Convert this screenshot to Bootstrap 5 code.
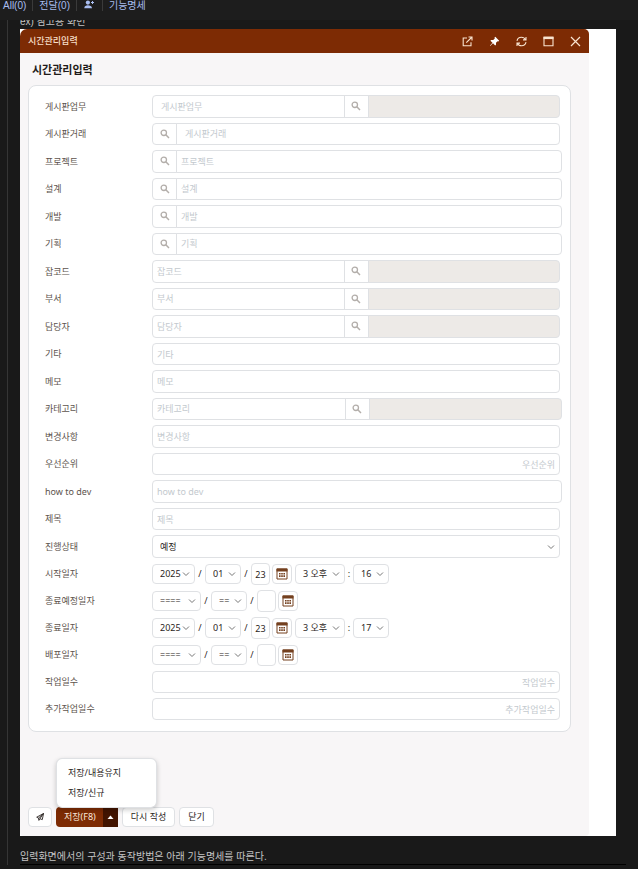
<!DOCTYPE html>
<html lang="ko">
<head>
<meta charset="utf-8">
<meta name="viewport" content="width=device-width, initial-scale=1">
<title>시간관리입력</title>
<link href="https://cdn.jsdelivr.net/npm/bootstrap@5.3.0/dist/css/bootstrap.min.css" rel="stylesheet">
<style>
:root{--brand:#7d2b04;--line:#dfe1e4;--hint:#c3c9ce;--ink:#2b2523}
body{background:#191919;color:#c4c4c4;font:10px/16px "Liberation Sans","Noto Sans CJK KR",sans-serif}
.topbar{height:20px;background:#1d1d1d;line-height:12px}
.topbar a{color:#a9bdf0;text-decoration:none;padding:0 6px;height:11px;border-right:1px solid #3a3a3a}
.topbar a:first-child{padding-left:3px}
.topbar a:nth-child(3){padding:0 8px 0 7px}
.topbar a:last-child{border:0}
.doc{margin-left:7px;border-left:1px solid #353535;padding:0 22px 0 12px}
.cut-line{height:9px;line-height:14px}
.shot{background:#fff;padding-right:27px;font-family:"Noto Sans","Noto Sans CJK KR",sans-serif;font-size:9px;line-height:14px;color:var(--ink)}
.window{background:#f8f6f7;border-radius:8px 6px 4px 4px}
.titlebar{background:var(--brand);color:#f6dfc9;height:24px;padding-left:8px;border-radius:7px 5px 0 0;font-weight:500}
.titlebar button{width:27px;height:24px;border:0;background:none;color:#f9e4d0;padding:0}
.window h1{font-size:11px;line-height:34px;height:32px;font-weight:700;margin:0;padding-left:12px;color:#1f1b1a}
.sheet{margin:0 18px 0 8px;border:1px solid var(--line);border-radius:8px;background:#fff;padding:9px 10px 11px 16px}
.rows{display:grid;gap:5px}
.rows-days{margin-top:5px}
.line{display:grid;grid-template-columns:107px minmax(0,1fr);align-items:center;height:22px}
.rows-main .line:nth-child(odd){height:23px}
.line>label{color:#5d534d}
.line>.form-control,.line>.form-select,.line>.input-group{height:100%}
.form-control,.form-select{font-size:9px;line-height:14px;min-height:0;padding:0 4px;border-color:var(--line);border-radius:4px;color:var(--ink);background-color:#fff}
.form-control::placeholder{color:var(--hint);opacity:1}
.form-control[readonly]{background:#edeae7}
.inset{text-indent:4px}
.overhang{margin-right:-2px;width:auto}
.form-select{padding:0 0 0 7px;background-image:url("data:image/svg+xml,%3Csvg xmlns='http://www.w3.org/2000/svg' viewBox='0 0 8 8'%3E%3Cpath fill='none' stroke='%23777' d='M1 2.5 4 5.5 7 2.5'/%3E%3C/svg%3E");background-size:8px 8px;background-position:right 4px center}
.btn-find{width:25px;padding:0 0 1px;border:1px solid var(--line);background:#fff;color:#b3aeaa;border-radius:4px;line-height:1}
.dates .form-select{height:20px;flex:none}
.dates .form-control{width:19px;height:22px;padding:0;text-align:center;flex:none}
.dates .y{width:43px}.dates .y-blank{width:49px}.dates .m{width:36px}.dates .h{width:50px}
.sep{width:10px;text-align:center}
.sep-colon{width:8px;text-align:center}
.btn-cal{width:20px;height:20px;margin:0 3px 0 2px;padding:0;border:1px solid var(--line);border-radius:4px;background:#fff;line-height:1;color:#74401f}
.actions{padding:75px 8px 9px;gap:4px}
.actions .btn{font-size:9px;line-height:14px;height:20px;padding:0 8px;border-radius:4px}
.actions .btn-plain,.actions .btn-plain:hover{border:1px solid var(--line);background:#fff;color:var(--ink)}
.actions .btn-send{width:24px;padding:0}
.actions .btn-save,.actions .btn-save:hover{background:var(--brand);color:#fbe9dc;border:0;border-radius:4px 0 0 4px}
.actions .btn-more{background:#421400;color:#fff;border:0;padding:0;width:15px;line-height:1;border-radius:0 4px 4px 0}
.save-menu{display:block;bottom:19px;left:0;min-width:101px;padding:4px 0;font-size:9px;border:1px solid var(--line);border-radius:6px;box-shadow:0 2px 5px #0003}
.save-menu .dropdown-item{padding:3px 11px;line-height:14px;color:var(--ink)}
.caption{margin:0 -10px 0 0;padding:13px 0 0;height:29px;border-bottom:1px solid #000}
svg{display:block;margin:auto}
</style>
<script src="https://cdn.jsdelivr.net/npm/bootstrap@5.3.0/dist/js/bootstrap.bundle.min.js"></script>
</head>
<body>
<svg width="0" height="0" class="d-none" aria-hidden="true">
<symbol id="find" viewBox="0 0 10 10"><circle cx="3.8" cy="3.8" r="2.7" fill="none" stroke="currentColor" stroke-width="1.3"/><path d="M5.8 5.8 9 9" stroke="currentColor" stroke-width="1.5"/></symbol>
<symbol id="cal" viewBox="0 0 12 12"><path d="M1 1h10v10H1z" fill="none" stroke="currentColor"/><path d="M.5.5h11v3H.5z" fill="currentColor"/><path d="M3 5h1.6v1.6H3zM5.2 5h1.6v1.6H5.2zM7.4 5H9v1.6H7.4zM3 7.3h1.6v1.6H3zM5.2 7.3h1.6v1.6H5.2zM7.4 7.3H9v1.6H7.4z" fill="currentColor"/></symbol>
</svg>

<nav class="topbar d-flex align-items-start">
<a href="#">All(0)</a><a href="#">전달(0)</a><a href="#" aria-label="사용자 추가"><svg width="10" height="10" viewBox="0 0 10 10" fill="currentColor"><circle cx="3.9" cy="2.6" r="2.1"/><path d="M.3 8.2C.3 6 2 5.2 3.9 5.2S8 6 8 8.2zM7 2h1V1h1v1h1v1H9v1H8V3H7z"/></svg></a><a href="#">기능명세</a>
</nav>

<main class="doc">
<div class="cut-line d-flex align-items-end overflow-hidden">ex) 참고용 화면</div>
<div class="shot">
<section class="window">
<header class="titlebar d-flex align-items-center">
<span class="me-auto">시간관리입력</span>
<button type="button" aria-label="새 창"><svg width="11" height="11" viewBox="0 0 11 11" fill="none" stroke="currentColor" stroke-width="1.1"><path d="M5 2H1.2v7.8H9V6.2M6.5 1H10v3.5M10 1 4.3 6.7"/></svg></button>
<button type="button" aria-label="고정"><svg width="11" height="11" viewBox="0 0 11 11" fill="#fff"><path d="M6.3.8 10.2 4.7 9.3 5.4 8.6 5.2 7 6.8 7 8.8 6.2 9.5 4 7.3 1.2 10 .9 9.7 3.5 6.8 1.4 4.7 2.1 4 4.2 4 5.8 2.4 5.5 1.6z"/></svg></button>
<button type="button" aria-label="새로고침"><svg width="11" height="11" viewBox="0 0 11 11" fill="none" stroke="currentColor" stroke-width="1.1"><path d="M1 4.8C1.5 2.3 3.4 1.2 5.4 1.2 7.3 1.2 8.8 2.2 9.6 3.8M10 .9v3H7M10 6.2C9.5 8.7 7.6 9.8 5.6 9.8 3.7 9.8 2.2 8.8 1.4 7.2M1 10.1v-3h3"/></svg></button>
<button type="button" aria-label="최대화"><svg width="11" height="11" viewBox="0 0 11 11"><path d="M1 1.2h9v8.6H1z" fill="none" stroke="currentColor" stroke-width="1.1"/><path d="M.5.7h10v2.4H.5z" fill="currentColor"/></svg></button>
<button type="button" aria-label="창 닫기"><svg width="11" height="11" viewBox="0 0 11 11" stroke="currentColor" stroke-width="1.2"><path d="m1 1 9 9M10 1 1 10"/></svg></button>
</header>
<h1>시간관리입력</h1>

<form>
<div class="sheet">
<div class="rows rows-main">
<div class="line"><label for="f1">게시판업무</label><div class="input-group"><input id="f1" class="form-control inset" placeholder="게시판업무"><button type="button" class="btn-find" aria-label="게시판업무 검색"><svg width="10" height="10"><use href="#find"/></svg></button><input class="form-control" readonly aria-label="게시판업무 이름"></div></div>
<div class="line"><label for="f2">게시판거래</label><div class="input-group"><button type="button" class="btn-find" aria-label="게시판거래 검색"><svg width="10" height="10"><use href="#find"/></svg></button><input id="f2" class="form-control inset" placeholder="게시판거래"></div></div>
<div class="line"><label for="f3">프로젝트</label><div class="input-group overhang"><button type="button" class="btn-find" aria-label="프로젝트 검색"><svg width="10" height="10"><use href="#find"/></svg></button><input id="f3" class="form-control" placeholder="프로젝트"></div></div>
<div class="line"><label for="f4">설계</label><div class="input-group overhang"><button type="button" class="btn-find" aria-label="설계 검색"><svg width="10" height="10"><use href="#find"/></svg></button><input id="f4" class="form-control" placeholder="설계"></div></div>
<div class="line"><label for="f5">개발</label><div class="input-group overhang"><button type="button" class="btn-find" aria-label="개발 검색"><svg width="10" height="10"><use href="#find"/></svg></button><input id="f5" class="form-control" placeholder="개발"></div></div>
<div class="line"><label for="f6">기획</label><div class="input-group overhang"><button type="button" class="btn-find" aria-label="기획 검색"><svg width="10" height="10"><use href="#find"/></svg></button><input id="f6" class="form-control" placeholder="기획"></div></div>
<div class="line"><label for="f7">잡코드</label><div class="input-group"><input id="f7" class="form-control" placeholder="잡코드"><button type="button" class="btn-find" aria-label="잡코드 검색"><svg width="10" height="10"><use href="#find"/></svg></button><input class="form-control" readonly aria-label="잡코드 이름"></div></div>
<div class="line"><label for="f8">부서</label><div class="input-group"><input id="f8" class="form-control" placeholder="부서"><button type="button" class="btn-find" aria-label="부서 검색"><svg width="10" height="10"><use href="#find"/></svg></button><input class="form-control" readonly aria-label="부서 이름"></div></div>
<div class="line"><label for="f9">담당자</label><div class="input-group"><input id="f9" class="form-control" placeholder="담당자"><button type="button" class="btn-find" aria-label="담당자 검색"><svg width="10" height="10"><use href="#find"/></svg></button><input class="form-control" readonly aria-label="담당자 이름"></div></div>
<div class="line"><label for="f10">기타</label><input id="f10" class="form-control" placeholder="기타"></div>
<div class="line"><label for="f11">메모</label><input id="f11" class="form-control" placeholder="메모"></div>
<div class="line"><label for="f12">카테고리</label><div class="input-group overhang"><input id="f12" class="form-control" placeholder="카테고리"><button type="button" class="btn-find" aria-label="카테고리 검색"><svg width="10" height="10"><use href="#find"/></svg></button><input class="form-control" readonly aria-label="카테고리 이름"></div></div>
<div class="line"><label for="f13">변경사항</label><input id="f13" class="form-control" placeholder="변경사항"></div>
<div class="line"><label for="f14">우선순위</label><input id="f14" class="form-control text-end" placeholder="우선순위"></div>
<div class="line"><label for="f15">how to dev</label><input id="f15" class="form-control overhang" placeholder="how to dev"></div>
<div class="line"><label for="f16">제목</label><input id="f16" class="form-control" placeholder="제목"></div>
<div class="line"><label for="f17">진행상태</label><select id="f17" class="form-select"><option>예정</option></select></div>
</div>
<div class="rows rows-days">
<div class="line"><label for="f18">시작일자</label><div class="dates d-flex align-items-center"><select id="f18" class="form-select y"><option>2025</option></select><span class="sep">/</span><select class="form-select m" aria-label="시작 월"><option>01</option></select><span class="sep">/</span><input class="form-control" value="23" aria-label="시작 일"><button type="button" class="btn-cal" aria-label="시작일자 달력"><svg width="12" height="12"><use href="#cal"/></svg></button><select class="form-select h" aria-label="시작 시"><option>3 오후</option></select><span class="sep-colon">:</span><select class="form-select m" aria-label="시작 분"><option>16</option></select></div></div>
<div class="line"><label for="f19">종료예정일자</label><div class="dates d-flex align-items-center"><select id="f19" class="form-select y-blank"><option>====</option></select><span class="sep">/</span><select class="form-select m" aria-label="종료예정 월"><option>==</option></select><span class="sep">/</span><input class="form-control" aria-label="종료예정 일"><button type="button" class="btn-cal" aria-label="종료예정일자 달력"><svg width="12" height="12"><use href="#cal"/></svg></button></div></div>
<div class="line"><label for="f20">종료일자</label><div class="dates d-flex align-items-center"><select id="f20" class="form-select y"><option>2025</option></select><span class="sep">/</span><select class="form-select m" aria-label="종료 월"><option>01</option></select><span class="sep">/</span><input class="form-control" value="23" aria-label="종료 일"><button type="button" class="btn-cal" aria-label="종료일자 달력"><svg width="12" height="12"><use href="#cal"/></svg></button><select class="form-select h" aria-label="종료 시"><option>3 오후</option></select><span class="sep-colon">:</span><select class="form-select m" aria-label="종료 분"><option>17</option></select></div></div>
<div class="line"><label for="f21">배포일자</label><div class="dates d-flex align-items-center"><select id="f21" class="form-select y-blank"><option>====</option></select><span class="sep">/</span><select class="form-select m" aria-label="배포 월"><option>==</option></select><span class="sep">/</span><input class="form-control" aria-label="배포 일"><button type="button" class="btn-cal" aria-label="배포일자 달력"><svg width="12" height="12"><use href="#cal"/></svg></button></div></div>
<div class="line"><label for="f22">작업일수</label><input id="f22" class="form-control text-end" placeholder="작업일수"></div>
<div class="line"><label for="f23">추가작업일수</label><input id="f23" class="form-control text-end" placeholder="추가작업일수"></div>
</div>
</div>

<div class="actions d-flex">
<button type="button" class="btn btn-plain btn-send" aria-label="보내기"><svg width="8" height="8" viewBox="0 0 8 8" fill="none" stroke="currentColor" stroke-width=".9"><path d="M7.5.5.7 4.2l1.8.9L7.5.5 6.3 6.6 3.9 5.7 2.9 7.4 2.5 5.1M7.5.5 3.9 5.7"/></svg></button>
<div class="btn-group dropup">
<button type="submit" class="btn btn-save">저장(F8)</button>
<button type="button" class="btn btn-more" aria-label="저장 메뉴" aria-expanded="true"><svg width="7" height="5" viewBox="0 0 7 5" fill="currentColor"><path d="M3.5.5 6.5 4h-6z"/></svg></button>
<div class="dropdown-menu show save-menu"><button type="button" class="dropdown-item">저장/내용유지</button><button type="button" class="dropdown-item">저장/신규</button></div>
</div>
<button type="reset" class="btn btn-plain">다시 작성</button>
<button type="button" class="btn btn-plain">닫기</button>
</div>
</form>
</section>
</div>
<p class="caption">입력화면에서의 구성과 동작방법은 아래 기능명세를 따른다.</p>
</main>
</body>
</html>
